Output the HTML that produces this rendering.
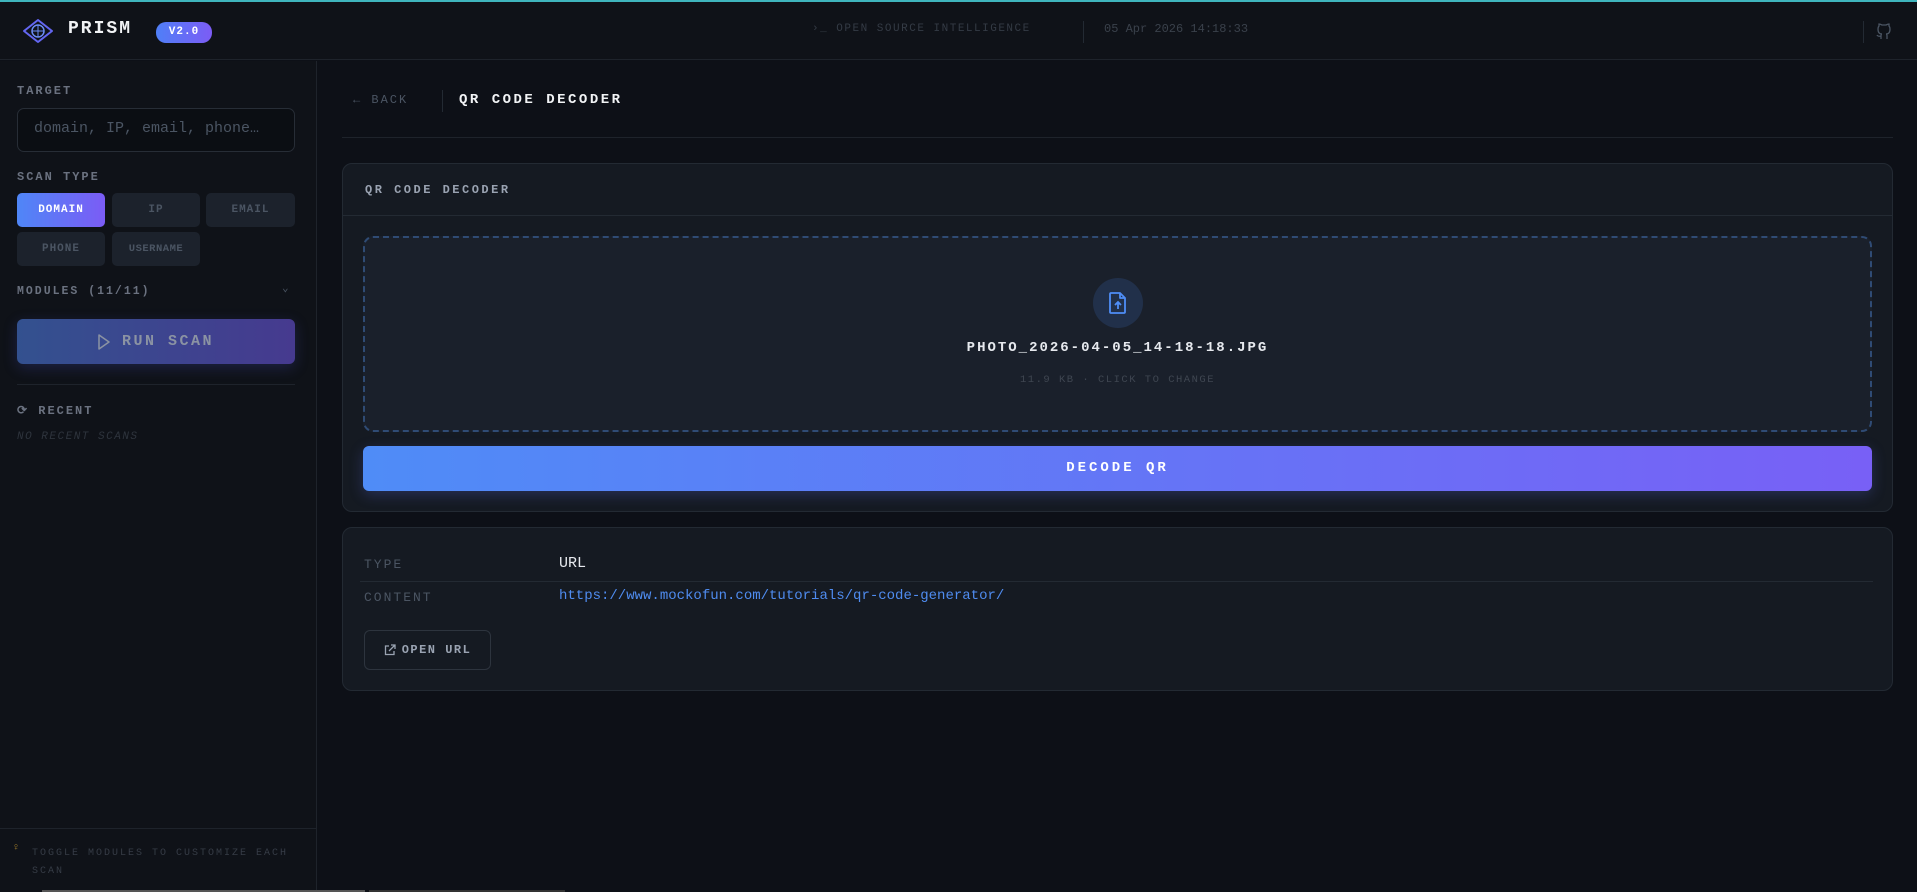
<!DOCTYPE html>
<html><head><meta charset="utf-8"><style>
*{box-sizing:border-box;margin:0;padding:0}
body{width:1917px;height:892px;background:#0d1017;font-family:"Liberation Mono",monospace;color:#c9d1d9;position:relative;overflow:hidden}
.px{font-family:"Liberation Mono",monospace;font-weight:bold;text-transform:uppercase;letter-spacing:2px}
.abs{position:absolute}
#top{position:absolute;left:0;top:0;width:1917px;height:2px;background:#3fb5bd}
#hdr{position:absolute;left:0;top:2px;width:1917px;height:58px;background:#0f1218;border-bottom:1px solid #1e232b}
#side{position:absolute;left:0;top:61px;width:317px;height:831px;background:#0f1218;border-right:1px solid #1e232b}
.lbl{font-size:12px;color:#6b7280}
.btn{position:absolute;height:34px;border-radius:5px;background:#1c222c;color:#4b5563;font-size:11px;display:flex;align-items:center;justify-content:center;letter-spacing:1px}
.card{position:absolute;left:342px;width:1551px;background:#151a22;border:1px solid #232a33;border-radius:10px}
</style></head><body>
<div id="top"></div>
<div id="hdr">
 <svg class="abs" style="left:22px;top:16px" width="32" height="26" viewBox="0 0 32 26"><path d="M2 13 L16 2 L30 13 L16 24 Z" fill="none" stroke="#6366f1" stroke-width="2" stroke-linejoin="round"/><circle cx="16" cy="13" r="6" fill="none" stroke="#6b8cf5" stroke-width="1.5"/><path d="M16 7v12M10 13h12" stroke="#6b8cf5" stroke-width="1"/></svg>
 <div class="abs px" style="left:68px;top:17px;font-size:18px;color:#f1f3f5;letter-spacing:2px">PRISM</div>
 <div class="abs px" style="left:156px;top:20px;width:56px;height:21px;border-radius:10px;background:linear-gradient(90deg,#4f7ff7,#7c5cf5);color:#fff;font-size:11px;text-align:center;line-height:21px;letter-spacing:1px">v2.0</div>
 <div class="abs" style="left:812px;top:21px;font-size:11px;color:#343b45;letter-spacing:1.5px">›_ OPEN SOURCE INTELLIGENCE</div>
 <div class="abs" style="left:1083px;top:19px;width:1px;height:22px;background:#232a33"></div>
 <div class="abs" style="left:1104px;top:20px;font-size:12px;color:#3a414b">05 Apr 2026 14:18:33</div>
 <div class="abs" style="left:1863px;top:19px;width:1px;height:22px;background:#232a33"></div>
 <svg class="abs" style="left:1876px;top:20px" width="16" height="18" viewBox="0 0 16 18"><path d="M5 17v-3c-3 1-4-1-4-1M11 17v-3c0-1 0-2-1-2 2 0 4-1 4-5 0-1 0-2-1-3 0-1 0-2 0-2s-1 0-3 1c-1 0-3 0-4 0-2-1-3-1-3-1s0 1 0 2c-1 1-1 2-1 3 0 4 2 5 4 5-1 0-1 1-1 2" fill="none" stroke="#4b5563" stroke-width="1.3"/></svg>
</div>
<div id="side">
 <div class="abs px lbl" style="left:17px;top:23px;font-size:12px">TARGET</div>
 <div class="abs" style="left:17px;top:47px;width:278px;height:44px;border:1px solid #272d36;border-radius:7px;background:#0b0e13;font-size:15px;color:#4b5563;padding:11px 0 0 16px">domain, IP, email, phone…</div>
 <div class="abs px lbl" style="left:17px;top:109px">SCAN TYPE</div>
 <div class="btn px" style="left:17px;top:132px;width:88px;background:linear-gradient(90deg,#4f86f7,#7b5cf5);color:#fff">DOMAIN</div>
 <div class="btn px" style="left:112px;top:132px;width:88px">IP</div>
 <div class="btn px" style="left:206px;top:132px;width:89px">EMAIL</div>
 <div class="btn px" style="left:17px;top:171px;width:88px">PHONE</div>
 <div class="btn px" style="left:112px;top:171px;width:88px;font-size:10.5px;letter-spacing:0.5px">USERNAME</div>
 <div class="abs px lbl" style="left:17px;top:224px;font-size:11.5px">MODULES (11/11)</div>
 <div class="abs" style="left:282px;top:220px;font-size:11px;color:#4b5563">⌄</div>
 <div class="abs px" style="left:17px;top:258px;width:278px;height:45px;border-radius:6px;background:linear-gradient(90deg,#33518f,#463a8f);box-shadow:0 4px 14px rgba(70,80,200,.25);color:#8b93a3;font-size:15px;display:flex;align-items:center;justify-content:center;gap:12px;letter-spacing:2.5px"><svg width="12" height="16" viewBox="0 0 12 16"><path d="M1 1 L11 8 L1 15 Z" fill="none" stroke="#8b93a3" stroke-width="1.5" stroke-linejoin="round"/></svg>RUN SCAN</div>
 <div class="abs" style="left:17px;top:323px;width:278px;height:1px;background:#1e232b"></div>
 <div class="abs px lbl" style="left:17px;top:342px;font-size:12px">⟳ RECENT</div>
 <div class="abs" style="left:17px;top:370px;font-size:11px;color:#2e343d;font-style:italic;letter-spacing:1.5px">NO RECENT SCANS</div>
 <div class="abs" style="left:0;top:767px;width:317px;height:1px;background:#1e232b"></div>
 <div class="abs" style="left:13px;top:782px;font-size:10px;color:#b38a2e">♀</div>
 <div class="abs" style="left:32px;top:784px;width:260px;font-size:10px;color:#363c46;letter-spacing:2px;line-height:18px">TOGGLE MODULES TO CUSTOMIZE EACH SCAN</div>
</div>
<div class="abs" style="left:42px;top:890px;width:323px;height:2px;background:#555"></div>
<div class="abs" style="left:369px;top:890px;width:196px;height:2px;background:#333"></div>

<div class="abs" style="left:353px;top:93px;font-size:12px;color:#4b5563;letter-spacing:2px">← BACK</div>
<div class="abs" style="left:442px;top:90px;width:1px;height:22px;background:#232a33"></div>
<div class="abs px" style="left:459px;top:92px;font-size:14px;color:#f1f3f5;letter-spacing:2.5px">QR CODE DECODER</div>
<div class="abs" style="left:342px;top:137px;width:1551px;height:1px;background:#1e232b"></div>

<div class="card" style="top:163px;height:349px">
 <div class="abs px" style="left:22px;top:19px;font-size:12px;color:#9aa3b2;letter-spacing:2.5px">QR CODE DECODER</div>
 <div class="abs" style="left:0;top:51px;width:100%;height:1px;background:#232a33"></div>
 <div class="abs" style="left:20px;top:72px;width:1509px;height:196px;border:2px dashed #2f4b74;border-radius:10px;background:#1a202b"></div>
 <div class="abs" style="left:750px;top:114px;width:50px;height:50px;border-radius:50%;background:#21304a"></div>
 <svg class="abs" style="left:766px;top:128px" width="18" height="22" viewBox="0 0 18 22"><path d="M2 1h9l5 5v14a1 1 0 0 1-1 1H2a1 1 0 0 1-1-1V2a1 1 0 0 1 1-1z M11 1v5h5" fill="none" stroke="#4f8ef7" stroke-width="1.8" stroke-linejoin="round"/><path d="M9 17v-7M6 13l3-3 3 3" fill="none" stroke="#4f8ef7" stroke-width="1.8"/></svg>
 <div class="abs px" style="left:0;width:100%;top:176px;text-align:center;font-size:14px;color:#e6e9ee;letter-spacing:2px">PHOTO_2026-04-05_14-18-18.JPG</div>
 <div class="abs" style="left:0;width:100%;top:210px;text-align:center;font-size:10.5px;color:#3f4651;letter-spacing:1.5px">11.9 KB · CLICK TO CHANGE</div>
 <div class="abs px" style="left:20px;top:282px;width:1509px;height:45px;border-radius:6px;background:linear-gradient(90deg,#4f8cf7,#7860f6);color:#fff;font-size:14px;text-align:center;line-height:45px;letter-spacing:3px;box-shadow:0 4px 14px rgba(90,110,240,.25)">DECODE QR</div>
</div>

<div class="card" style="top:527px;height:164px">
 <div class="abs" style="left:21px;top:29px;font-size:13px;color:#4b5563;letter-spacing:2px">TYPE</div>
 <div class="abs" style="left:216px;top:27px;font-size:15px;color:#e6e9ee">URL</div>
 <div class="abs" style="left:17px;top:53px;width:1513px;height:1px;background:#232a33"></div>
 <div class="abs" style="left:21px;top:62px;font-size:13px;color:#4b5563;letter-spacing:2px">CONTENT</div>
 <div class="abs" style="left:216px;top:60px;font-size:14px;color:#4f8cf0">https://www.mockofun.com/tutorials/qr-code-generator/</div>
 <div class="abs" style="left:21px;top:102px;width:127px;height:40px;border:1px solid #2d343e;border-radius:6px;font-size:12px;color:#9aa3b2;display:flex;align-items:center;justify-content:center;gap:6px;letter-spacing:1.5px;font-weight:bold"><svg width="12" height="12" viewBox="0 0 12 12"><path d="M5 2H1.5v8.5H10V7M7 1h4v4M11 1L5 7" fill="none" stroke="#9aa3b2" stroke-width="1.3"/></svg>OPEN URL</div>
</div>
</body></html>
